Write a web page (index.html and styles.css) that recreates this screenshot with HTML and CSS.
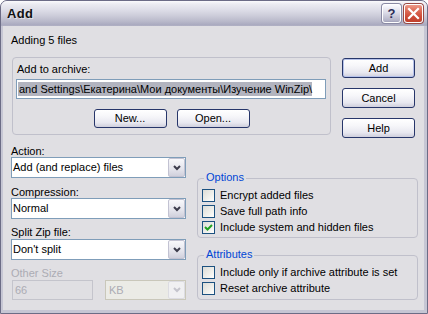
FILE: index.html
```html
<!DOCTYPE html>
<html>
<head>
<meta charset="utf-8">
<link rel="stylesheet" href="styles.css">
</head>
<body>
<div class="window">
  <div class="titlebar">
    <span class="title">Add</span>
    <span class="cbtn help">?</span>
    <span class="cbtn close">
      <svg width="13" height="13" viewBox="0 0 13 13"><path d="M2 2 L11 11 M11 2 L2 11" stroke="#fff" stroke-width="2.2" stroke-linecap="square"/></svg>
    </span>
  </div>
  <div class="client">
    <div class="top">
      <div class="top-left">
        <div class="info">Adding 5 files</div>
        <div class="archive-box">
          <div class="box-label">Add to archive:</div>
          <div class="path-field"><span class="sel">and Settings\Екатерина\Мои документы\Изучение WinZip\</span></div>
          <div class="box-buttons">
            <button class="btn small">New...</button>
            <button class="btn small">Open...</button>
          </div>
        </div>
      </div>
      <div class="side-buttons">
        <button class="btn default">Add</button>
        <button class="btn">Cancel</button>
        <button class="btn">Help</button>
      </div>
    </div>
    <div class="bottom">
      <div class="form">
        <div class="flabel">Action:</div>
        <div class="select"><span class="select-text">Add (and replace) files</span><span class="select-btn"><svg width="8" height="6" viewBox="0 0 8 6"><path d="M1 1 L4 4 L7 1" fill="none" stroke="#3c3c4c" stroke-width="2"/></svg></span></div>
        <div class="flabel gap">Compression:</div>
        <div class="select"><span class="select-text">Normal</span><span class="select-btn"><svg width="8" height="6" viewBox="0 0 8 6"><path d="M1 1 L4 4 L7 1" fill="none" stroke="#3c3c4c" stroke-width="2"/></svg></span></div>
        <div class="flabel gap tall">Split Zip file:</div>
        <div class="select"><span class="select-text">Don't split</span><span class="select-btn"><svg width="8" height="6" viewBox="0 0 8 6"><path d="M1 1 L4 4 L7 1" fill="none" stroke="#3c3c4c" stroke-width="2"/></svg></span></div>
        <div class="flabel gap tall disabled">Other Size</div>
        <div class="size-row">
          <div class="dfield">66</div>
          <div class="select dis"><span class="select-text">KB</span><span class="select-btn"><svg width="8" height="6" viewBox="0 0 8 6"><path d="M1 1 L4 4 L7 1" fill="none" stroke="#c4c4cc" stroke-width="2"/></svg></span></div>
        </div>
      </div>
      <div class="groups">
        <div class="group">
          <span class="legend">Options</span>
          <div class="check"><span class="box"></span>Encrypt added files</div>
          <div class="check"><span class="box"></span>Save full path info</div>
          <div class="check"><span class="box"><svg width="11" height="11" viewBox="0 0 11 11"><path d="M2 5 L4.5 7.5 L9 3" fill="none" stroke="#21a121" stroke-width="2"/></svg></span>Include system and hidden files</div>
        </div>
        <div class="group attr">
          <span class="legend">Attributes</span>
          <div class="check"><span class="box"></span>Include only if archive attribute is set</div>
          <div class="check"><span class="box"></span>Reset archive attribute</div>
        </div>
      </div>
    </div>
  </div>
</div>
</body>
</html>
```
FILE: styles.css
```css
* { box-sizing: border-box; }
html, body { margin: 0; padding: 0; }
body {
  width: 428px;
  height: 314px;
  overflow: hidden;
  background: #fff;
  font-family: "Liberation Sans", Arial, sans-serif;
  font-size: 11px;
  line-height: 13px;
  color: #000;
}
.window {
  width: 428px;
  height: 314px;
  display: flex;
  flex-direction: column;
  background: #c6c6d4;
  border: 1px solid #6c6c86;
  border-radius: 7px 7px 0 0;
  overflow: hidden;
}
.titlebar {
  height: 25px;
  flex: none;
  display: flex;
  align-items: center;
  gap: 2px;
  padding: 0 4px 0 6px;
  background: linear-gradient(#fbfbfd 0%, #ececf2 12%, #dedee8 35%, #cdcdda 58%, #babacb 80%, #a9a9bf 96%, #b4b4c6 100%);
}
.title {
  flex: 1;
  font-weight: bold;
  font-size: 13px;
  color: #111;
  text-shadow: 1px 1px 0 rgba(255,255,255,0.55);
  letter-spacing: 0.3px;
}
.cbtn {
  width: 21px;
  height: 21px;
  border-radius: 3px;
  display: flex;
  align-items: center;
  justify-content: center;
}
.help {
  border: 1px solid #fff;
  box-shadow: 0 0 0 1px #8a8aa4;
  background: linear-gradient(#fafaff, #dcdce8 45%, #b4b4c8 90%, #a0a0b8);
  font-weight: bold;
  font-size: 13px;
  color: #2c2c58;
  width: 19px;
  height: 19px;
  margin-right: 1px;
}
.close {
  border: 1px solid #fff;
  box-shadow: 0 0 0 1px #9a4a44;
  background: linear-gradient(#ee9a88, #dc6a56 35%, #cc4a36 70%, #c0402c);
  width: 19px;
  height: 19px;
}
.client {
  flex: 1;
  margin: 0 3px 3px 2px;
  background: #e0dfe3;
  padding: 8px 0 0 8px;
}
.top {
  display: flex;
  align-items: flex-start;
}
.top-left { width: 320px; }
.info { height: 13px; }
.archive-box {
  margin: 10px 0 0 1px;
  width: 319px;
  height: 78px;
  border: 1px solid #c0c0cb;
  border-radius: 4px;
  padding: 5px 3px 0 3px;
}
.box-label { height: 13px; padding-left: 1px; }
.path-field {
  margin-top: 3px;
  width: 310px;
  height: 20px;
  border: 1px solid #7f9db9;
  background: #fff;
  padding: 2px 1px;
  white-space: nowrap;
  overflow: hidden;
}
.sel {
  display: inline-block;
  background: #b2b4bf;
  height: 14px;
  line-height: 14px;
  padding-left: 1px;
}
.box-buttons {
  margin-top: 10px;
  display: flex;
  justify-content: center;
  gap: 10px;
}
.btn {
  width: 73px;
  height: 20px;
  padding: 0;
  border: 1px solid #27366a;
  border-radius: 3px;
  background: linear-gradient(#ffffff 0%, #f7f7fa 35%, #e8e8f0 75%, #cfcfdc 100%);
  font: inherit;
  color: #000;
  text-align: center;
}
.btn.small { height: 19px; }
.btn.default {
  box-shadow: inset 0 0 0 1px #b6c2ea;
}
.side-buttons {
  margin-left: 11px;
  margin-top: 24px;
  display: flex;
  flex-direction: column;
  gap: 10px;
}
.bottom {
  display: flex;
  margin-top: 7px;
}
.form { width: 175px; }
.flabel { height: 12px; }
.flabel.gap { margin-top: 8px; }
.flabel.tall { height: 13px; margin-top: 7px; }
.flabel.disabled { color: #acacb4; }
.select {
  display: flex;
  height: 21px;
  border: 1px solid #7f9db9;
  background: #fff;
}
.select-text {
  flex: 1;
  padding-left: 1px;
  line-height: 19px;
  white-space: nowrap;
}
.select-btn {
  width: 17px;
  height: 19px;
  border: 1px solid #c2c2d2;
  border-radius: 2px;
  background: linear-gradient(#f8f8fb, #e4e4ec 60%, #d0d0dc);
  display: flex;
  align-items: center;
  justify-content: center;
}
.size-row {
  display: flex;
  height: 20px;
}
.dfield {
  margin-left: 1px;
  width: 81px;
  height: 20px;
  border: 1px solid #c4c4cc;
  background: #e0dfe3;
  color: #acacb4;
  padding-left: 2px;
  line-height: 18px;
}
.select.dis {
  margin-left: 12px;
  width: 81px;
  height: 20px;
  border-color: #c9c7ba;
  background: #ebebe6;
  color: #acacb4;
}
.select.dis .select-text { padding-left: 3px; line-height: 18px; }
.select.dis .select-btn {
  height: 18px;
  border-color: #dcdce2;
  background: #f0f0f2;
}
.groups {
  margin-left: 11px;
  width: 221px;
  padding-top: 33px;
}
.group {
  position: relative;
  border: 1px solid #c0c0cb;
  border-radius: 4px;
  padding: 8px 0 2px 4px;
}
.group.attr {
  margin-top: 17px;
  padding-bottom: 3px;
}
.legend {
  position: absolute;
  top: -8px;
  left: 6px;
  padding: 0 2px;
  background: #e0dfe3;
  color: #0046d5;
}
.check {
  display: flex;
  align-items: center;
  gap: 5px;
  height: 16px;
  white-space: nowrap;
}
.box {
  width: 13px;
  height: 13px;
  flex: none;
  border: 1px solid #1c5180;
  background: linear-gradient(135deg, #dcdcd7 0%, #f0f0ec 60%, #ffffff 100%);
  display: flex;
  align-items: center;
  justify-content: center;
}
```
